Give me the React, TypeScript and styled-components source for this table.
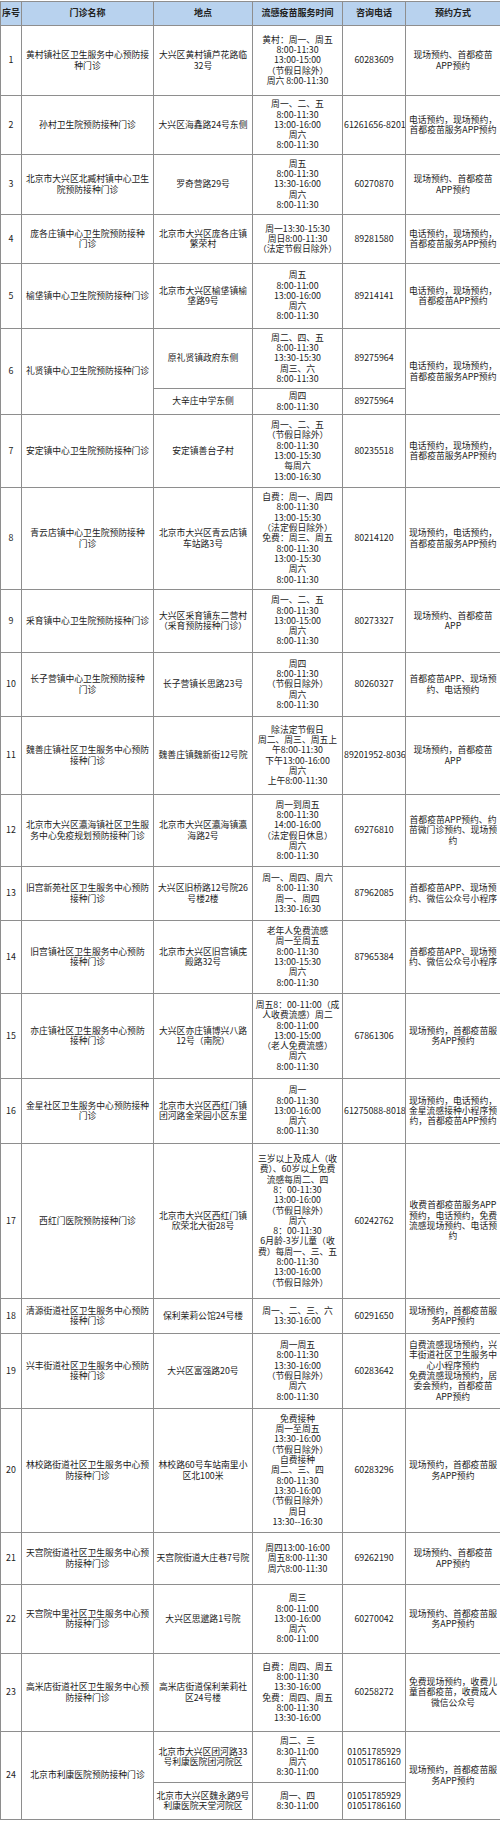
import React from 'react';
import styled, { createGlobalStyle } from 'styled-components';

const GlobalStyle = createGlobalStyle`
  html, body {
    margin: 0;
    padding: 0;
    background: #fff;
  }
  body {
    font-family: "Noto Sans CJK SC", "Liberation Sans", sans-serif;
  }
`;

type Sub = { addr: string; time: string; phone: string; h: number };
type Row = { no: number; name: string; method: string; subs: Sub[] };

const rows: Row[] = [
  {
    no: 1,
    name: '黄村镇社区卫生服务中心预防接\n种门诊',
    method: '现场预约、首都疫苗\nAPP预约',
    subs: [{ addr: '大兴区黄村镇芦花路临\n32号', time: '黄村：周一、周五\n8:00-11:30\n13:00-15:00\n（节假日除外）\n周六 8:00-11:30', phone: '60283609', h: 70 }],
  },
  {
    no: 2,
    name: '孙村卫生院预防接种门诊',
    method: '电话预约，现场预约，\n首都疫苗服务APP预约',
    subs: [{ addr: '大兴区海鑫路24号东侧', time: '周一、二、五\n8:00-11:30\n13:00-16:00\n周六\n8:00-11:30', phone: '61261656-8201', h: 59 }],
  },
  {
    no: 3,
    name: '北京市大兴区北臧村镇中心卫生\n院预防接种门诊',
    method: '现场预约、首都疫苗\nAPP预约',
    subs: [{ addr: '罗奇营路29号', time: '周五\n8:00-11:30\n13:30-16:00\n周六\n8:00-11:30', phone: '60270870', h: 60 }],
  },
  {
    no: 4,
    name: '庞各庄镇中心卫生院预防接种\n门诊',
    method: '电话预约，现场预约，\n首都疫苗服务APP预约',
    subs: [{ addr: '北京市大兴区庞各庄镇\n繁荣村', time: '周一13:30-15:30\n周日8:00-11:30\n（法定节假日除外）', phone: '89281580', h: 49 }],
  },
  {
    no: 5,
    name: '榆垡镇中心卫生院预防接种门诊',
    method: '电话预约，现场预约，\n首都疫苗APP预约',
    subs: [{ addr: '北京市大兴区榆垡镇榆\n垡路9号', time: '周五\n8:00-11:00\n13:00-16:00\n周六\n8:00-11:30', phone: '89214141', h: 65 }],
  },
  {
    no: 6,
    name: '礼贤镇中心卫生院预防接种门诊',
    method: '电话预约，现场预约，\n首都疫苗服务APP预约',
    subs: [
      { addr: '原礼贤镇政府东侧', time: '周二、四、五\n8:00-11:30\n13:30-15:30\n周三、六\n8:00-11:30', phone: '89275964', h: 60 },
      { addr: '大辛庄中学东侧', time: '周四\n8:00-11:30', phone: '89275964', h: 26 },
    ],
  },
  {
    no: 7,
    name: '安定镇中心卫生院预防接种门诊',
    method: '电话预约，现场预约，\n首都疫苗服务APP预约',
    subs: [{ addr: '安定镇善台子村', time: '周一、二、五\n（节假日除外）\n8:00-11:30\n13:00-15:30\n每周六\n13:00-16:30', phone: '80235518', h: 73 }],
  },
  {
    no: 8,
    name: '青云店镇中心卫生院预防接种\n门诊',
    method: '现场预约，电话预约，\n首都疫苗服务APP预约',
    subs: [{ addr: '北京市大兴区青云店镇\n车站路3号', time: '自费：周一、周四\n8:00-11:30\n13:00-15:30\n（法定假日除外）\n免费：周三、周五\n8:00-11:30\n13:00-15:30\n周六\n8:00-11:30', phone: '80214120', h: 102 }],
  },
  {
    no: 9,
    name: '采育镇中心卫生院预防接种门诊',
    method: '现场预约、首都疫苗\nAPP',
    subs: [{ addr: '大兴区采育镇东二营村\n（采育预防接种门诊）', time: '周一、二、五\n8:00-11:30\n13:00-15:00\n周六\n8:00-11:30', phone: '80273327', h: 63 }],
  },
  {
    no: 10,
    name: '长子营镇中心卫生院预防接种\n门诊',
    method: '首都疫苗APP、现场预\n约、电话预约',
    subs: [{ addr: '长子营镇长思路23号', time: '周四\n8:00-11:30\n（节假日除外）\n周六\n8:00-11:30', phone: '80260327', h: 64 }],
  },
  {
    no: 11,
    name: '魏善庄镇社区卫生服务中心预防\n接种门诊',
    method: '现场预约，首都疫苗\nAPP',
    subs: [{ addr: '魏善庄镇魏新街12号院', time: '除法定节假日\n周二、周三、周五上\n午8:00-11:30\n下午13:00-16:00\n周六\n上午8:00-11:30', phone: '89201952-8036', h: 78 }],
  },
  {
    no: 12,
    name: '北京市大兴区瀛海镇社区卫生服\n务中心免疫规划预防接种门诊',
    method: '首都疫苗APP预约、约\n苗微门诊预约、现场预\n约',
    subs: [{ addr: '北京市大兴区瀛海镇瀛\n海路2号', time: '周一到周五\n8:00-11:30\n14:00-16:00\n（法定假日休息）\n周六\n8:00-11:30', phone: '69276810', h: 72 }],
  },
  {
    no: 13,
    name: '旧宫新苑社区卫生服务中心预防\n接种门诊',
    method: '首都疫苗APP、现场预\n约、微信公众号小程序',
    subs: [{ addr: '大兴区旧桥路12号院26\n号楼2楼', time: '周一、周四、周六\n8:00-11:30\n周一、周四\n13:30-16:30', phone: '87962085', h: 54 }],
  },
  {
    no: 14,
    name: '旧宫镇社区卫生服务中心预防\n接种门诊',
    method: '首都疫苗APP、现场预\n约、微信公众号小程序',
    subs: [{ addr: '北京市大兴区旧宫镇庑\n殿路32号', time: '老年人免费流感\n周一至周五\n8:00-11:30\n13:00-15:30\n周六\n8:00-11:30', phone: '87965384', h: 73 }],
  },
  {
    no: 15,
    name: '亦庄镇社区卫生服务中心预防\n接种门诊',
    method: '现场预约，首都疫苗服\n务APP预约',
    subs: [{ addr: '大兴区亦庄镇博兴八路\n12号（南院）', time: '周五8：00-11:00（成\n人收费流感）周二\n8:00-11:00\n13:00-15:00\n（老人免费流感）\n周六\n8:00-11:30', phone: '67861306', h: 85 }],
  },
  {
    no: 16,
    name: '金星社区卫生服务中心预防接种\n门诊',
    method: '现场预约，电话预约，\n金星流感接种小程序预\n约，首都疫苗APP预约',
    subs: [{ addr: '北京市大兴区西红门镇\n团河路金荣园小区东里', time: '周一\n8:00-11:30\n13:00-16:00\n周六\n8:00-11:30', phone: '61275088-8018', h: 65 }],
  },
  {
    no: 17,
    name: '西红门医院预防接种门诊',
    method: '收费首都疫苗服务APP\n预约，电话预约，免费\n流感现场预约、电话预\n约',
    subs: [{ addr: '北京市大兴区西红门镇\n欣荣北大街28号', time: '三岁以上及成人（收\n费）、60岁以上免费\n流感每周二、四\n8：00-11:30\n13:00-16:00\n（节假日除外）\n周六\n8：00-11:30\n6月龄-3岁儿童（收\n费）每周一、三、五\n8:00-11:30\n13:00-16:00\n（节假日除外）', phone: '60242762', h: 155 }],
  },
  {
    no: 18,
    name: '清源街道社区卫生服务中心预防\n接种门诊',
    method: '现场预约，首都疫苗服\n务APP预约',
    subs: [{ addr: '保利茉莉公馆24号楼', time: '周一、二、三、六\n13:30-16:00', phone: '60291650', h: 35 }],
  },
  {
    no: 19,
    name: '兴丰街道社区卫生服务中心预防\n接种门诊',
    method: '自费流感现场预约，兴\n丰街道社区卫生服务中\n心小程序预约\n免费流感现场预约，居\n委会预约，首都疫苗\nAPP预约',
    subs: [{ addr: '大兴区富强路20号', time: '周一周五\n8:00-11:30\n13:30-16:00\n（节假日除外）\n周六\n8:00-11:30', phone: '60283642', h: 75 }],
  },
  {
    no: 20,
    name: '林校路街道社区卫生服务中心预\n防接种门诊',
    method: '现场预约，首都疫苗服\n务APP预约',
    subs: [{ addr: '林校路60号车站南里小\n区北100米', time: '免费接种\n周一至周五\n13:30-16:00\n（节假日除外）\n自费接种\n周二、三、四\n8:00-11:30\n13:30-16:00\n（节假日除外）\n周日\n13:30--16:30', phone: '60283296', h: 124 }],
  },
  {
    no: 21,
    name: '天宫院街道社区卫生服务中心预\n防接种门诊',
    method: '现场预约、首都疫苗\nAPP预约',
    subs: [{ addr: '天宫院街道大庄巷7号院', time: '周四13:00-16:00\n周五8:00-11:30\n周六8:00-11:30', phone: '69262190', h: 52 }],
  },
  {
    no: 22,
    name: '天宫院中里社区卫生服务中心预\n防接种门诊',
    method: '现场预约、首都疫苗服\n务APP预约',
    subs: [{ addr: '大兴区思邈路1号院', time: '周三\n8:00-11:00\n13:00-16:00\n周六\n8:00-11:00', phone: '60270042', h: 69 }],
  },
  {
    no: 23,
    name: '高米店街道社区卫生服务中心预\n防接种门诊',
    method: '免费现场预约，收费儿\n童首都疫苗，收费成人\n微信公众号',
    subs: [{ addr: '高米店街道保利茉莉社\n区24号楼', time: '自费：周四、周五\n8:00-11:30\n13:30-16:00\n免费：周四、周五\n8:00-11:30\n13:30-16:00', phone: '60258272', h: 78 }],
  },
  {
    no: 24,
    name: '北京市利康医院预防接种门诊',
    method: '现场预约，首都疫苗服\n务APP预约',
    subs: [
      { addr: '北京市大兴区团河路33\n号利康医院团河院区', time: '周二、三\n8:30-11:00\n周六\n8:30-11:00', phone: '01051785929\n01051786160', h: 51 },
      { addr: '北京市大兴区魏永路9号\n利康医院天堂河院区', time: '周一、四\n8:30-11:00', phone: '01051785929\n01051786160', h: 37 },
    ],
  },
];

const App = () => {
  return (
    <>
      <GlobalStyle />
      <Table>
        <colgroup>
          <Col $w={21} />
          <Col $w={132} />
          <Col $w={99} />
          <Col $w={90} />
          <Col $w={63} />
          <Col $w={95} />
        </colgroup>
        <thead>
          <Tr $h={24}>
            <Th>序号</Th>
            <Th>门诊名称</Th>
            <Th>地点</Th>
            <Th>流感疫苗服务时间</Th>
            <Th>咨询电话</Th>
            <Th>预约方式</Th>
          </Tr>
        </thead>
        <tbody>
          {rows.map((row) =>
            row.subs.map((sub, i) => (
              <Tr key={`${row.no}-${i}`} $h={sub.h}>
                {i === 0 && <Td rowSpan={row.subs.length}>{row.no}</Td>}
                {i === 0 && <Td rowSpan={row.subs.length}>{row.name}</Td>}
                <Td>{sub.addr}</Td>
                <Td>{sub.time}</Td>
                <Td>{sub.phone}</Td>
                {i === 0 && <Td rowSpan={row.subs.length}>{row.method}</Td>}
              </Tr>
            ))
          )}
        </tbody>
      </Table>
    </>
  );
};

export default App;

const Table = styled.table`
  width: 500px;
  table-layout: fixed;
  border-collapse: collapse;
  margin-top: 1px;
  color: #222;
  font-size: 8.8px;
  line-height: 10.3px;
`;

const Col = styled.col<{ $w: number }>`
  width: ${(p) => p.$w}px;
`;

const Tr = styled.tr<{ $h: number }>`
  height: ${(p) => p.$h}px;
`;

const Th = styled.th`
  background: #b8d2ee;
  border: 1px solid #8e8e8e;
  padding: 0;
  font-weight: 700;
  font-size: 9px;
  text-align: center;
  vertical-align: middle;
  white-space: nowrap;
`;

const Td = styled.td`
  border: 1px solid #8e8e8e;
  padding: 0 1px;
  text-align: center;
  vertical-align: middle;
  white-space: pre;
  overflow: hidden;
`;
